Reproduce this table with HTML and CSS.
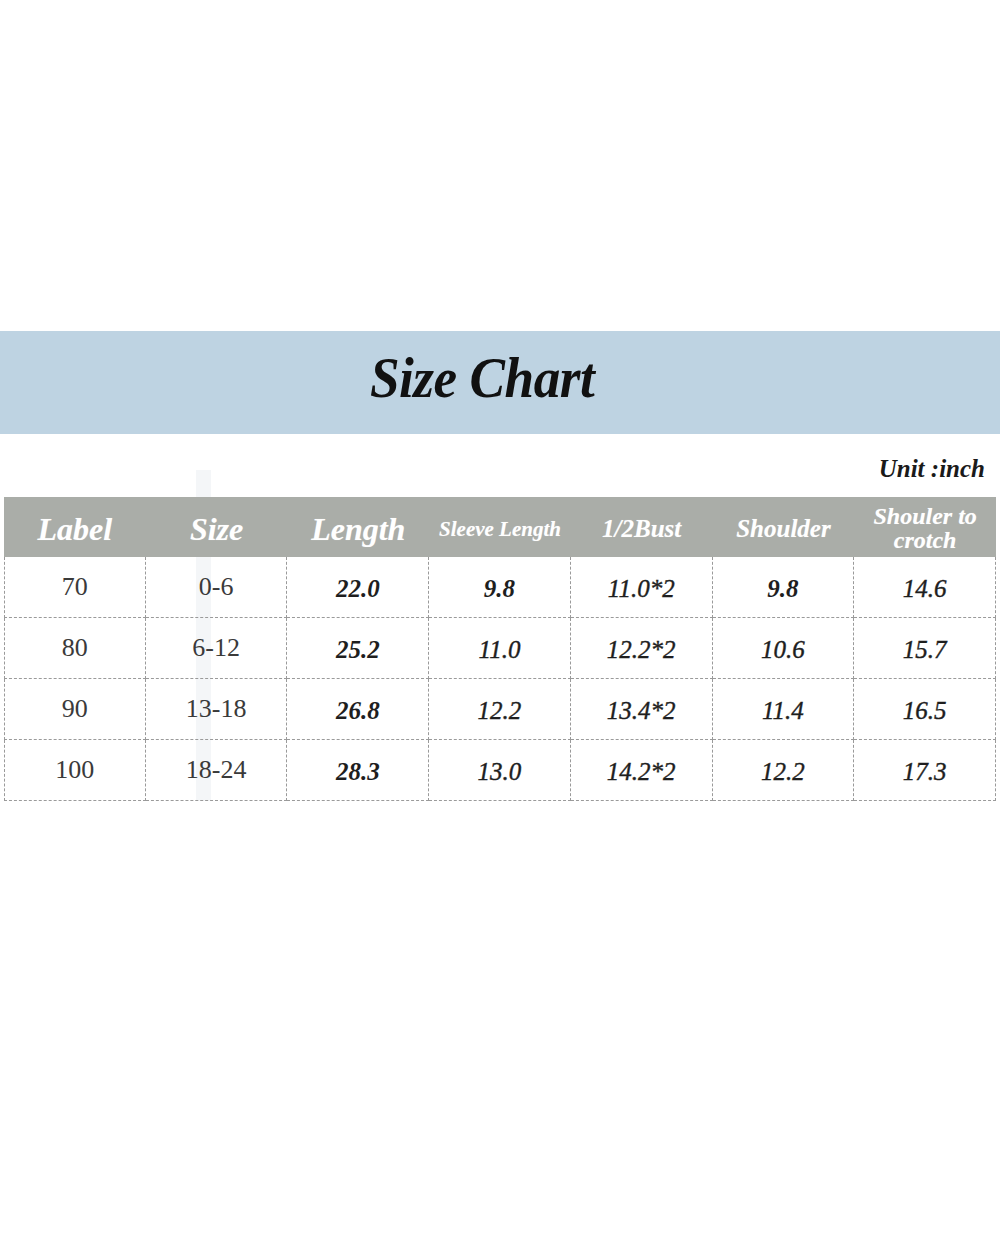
FILE: index.html
```html
<!DOCTYPE html>
<html>
<head>
<meta charset="utf-8">
<link rel="stylesheet" href="styles.css">
</head>
<body>
<div class="page">
  <header class="band"><h1 class="title">Size Chart</h1></header>
  <div class="unit">Unit :inch</div>
  <div class="chart">
    <div class="stripe"></div>
    <div class="grid">
      <div class="th big">Label</div>
      <div class="th big">Size</div>
      <div class="th big">Length</div>
      <div class="th small">Sleeve Length</div>
      <div class="th mid">1/2Bust</div>
      <div class="th mid">Shoulder</div>
      <div class="th mid two">Shouler to<br>crotch</div>

      <div class="td first plain">70</div>
      <div class="td plain">0-6</div>
      <div class="td bi">22.0</div>
      <div class="td bi">9.8</div>
      <div class="td it">11.0*2</div>
      <div class="td bi">9.8</div>
      <div class="td it">14.6</div>

      <div class="td first plain">80</div>
      <div class="td plain">6-12</div>
      <div class="td bi">25.2</div>
      <div class="td it">11.0</div>
      <div class="td it">12.2*2</div>
      <div class="td it">10.6</div>
      <div class="td it">15.7</div>

      <div class="td first plain">90</div>
      <div class="td plain">13-18</div>
      <div class="td bi">26.8</div>
      <div class="td it">12.2</div>
      <div class="td it">13.4*2</div>
      <div class="td it">11.4</div>
      <div class="td it">16.5</div>

      <div class="td first plain">100</div>
      <div class="td plain">18-24</div>
      <div class="td bi">28.3</div>
      <div class="td it">13.0</div>
      <div class="td it">14.2*2</div>
      <div class="td it">12.2</div>
      <div class="td it">17.3</div>
    </div>
  </div>
</div>
</body>
</html>
```

FILE: styles.css
```css
html, body {
  margin: 0;
  padding: 0;
  background: #ffffff;
}

.page {
  width: 1000px;
  padding-top: 331px;
  font-family: "Liberation Serif", "Times New Roman", serif;
  color: #222;
}

.band {
  height: 103px;
  background: #bed3e2;
  display: flex;
  align-items: center;
  justify-content: center;
  padding: 0 36px 7px 0;
  box-sizing: border-box;
}

.title {
  margin: 0;
  font-size: 56px;
  font-weight: bold;
  font-style: italic;
  color: #111;
  line-height: 1.1;
  transform: scaleX(0.95);
  letter-spacing: -0.5px;
}

.unit {
  margin: 20px 15px 13px 0;
  text-align: right;
  font-size: 25px;
  line-height: 30px;
  font-style: italic;
  font-weight: bold;
  color: #1a1a1a;
}

.chart {
  position: relative;
  margin: 0 4px;
}

.stripe {
  position: absolute;
  left: 192px;
  top: -27px;
  width: 15px;
  height: 350px;
  background: #f4f6f8;
}

.grid {
  position: relative;
  display: grid;
  grid-template-columns: repeat(7, 1fr);
  grid-template-rows: 60px repeat(4, 61px);
}

.th {
  background: #aaada8;
  color: #ffffff;
  font-weight: bold;
  font-style: italic;
  display: flex;
  align-items: center;
  justify-content: center;
  text-align: center;
  text-shadow: 0 0 1px rgba(255,255,255,0.4);
}

.th.big { font-size: 32px; padding-top: 5px; }
.th.mid { font-size: 25px; padding-top: 3px; }
.th.small { font-size: 21px; padding-top: 5px; }
.th.two { font-size: 24px; line-height: 24px; padding-top: 2px; }

.td {
  display: flex;
  align-items: center;
  justify-content: center;
  border-right: 1px dashed #9a9a9a;
  border-bottom: 1px dashed #9a9a9a;
  box-sizing: border-box;
  padding-top: 3px;
}

.td.first {
  border-left: 1px dashed #9a9a9a;
}

.td.plain {
  font-size: 26px;
  color: #3a3a3a;
  padding-top: 0;
}

.td.bi {
  font-size: 25px;
  font-style: italic;
  font-weight: bold;
  color: #1e1e1e;
}

.td.it {
  font-size: 25px;
  font-style: italic;
  color: #1e1e1e;
  -webkit-text-stroke: 0.4px #1e1e1e;
}
```
